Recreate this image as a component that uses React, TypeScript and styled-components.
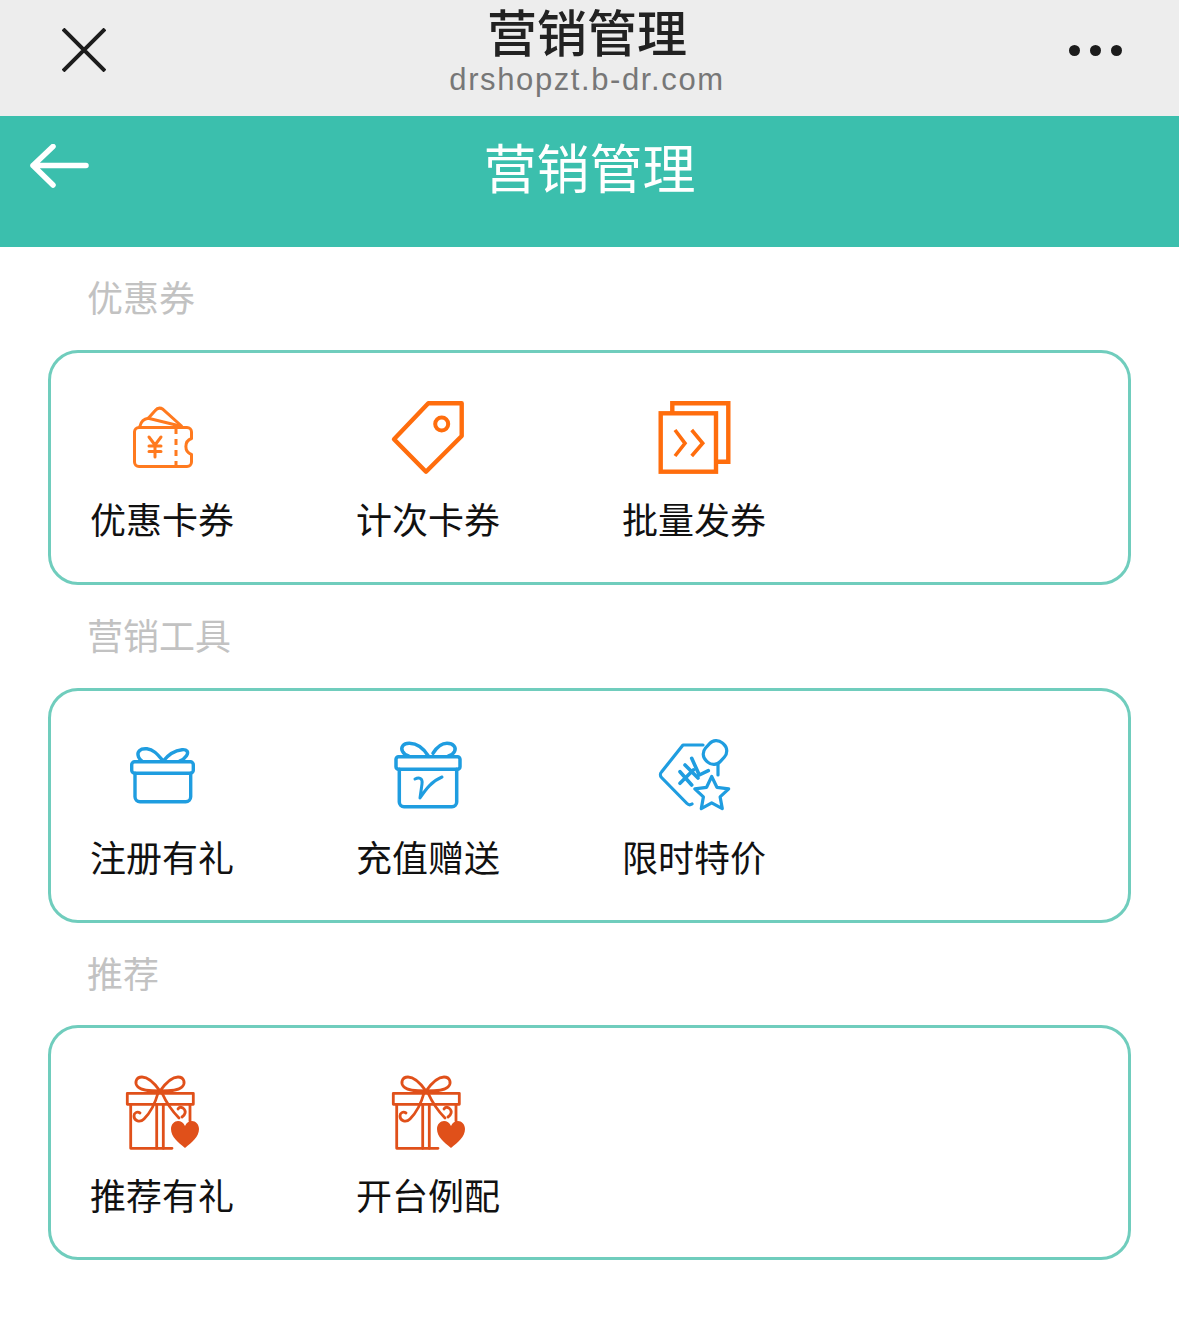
import React from "react";
import styled, { createGlobalStyle } from "styled-components";

const GlobalStyle = createGlobalStyle`
  html, body {
    margin: 0;
    padding: 0;
    background: #fff;
  }
  body {
    font-family: "Noto Sans CJK SC", "Noto Sans", sans-serif;
  }
`;

const Page = styled.div`
  width: 1179px;
  min-height: 1326px;
  background: #fff;
`;

const TopBar = styled.div`
  height: 116px;
  box-sizing: border-box;
  padding: 0 57px 16px 62px;
  background: #ededed;
  display: grid;
  grid-template-columns: 200px 1fr 210px;
  align-items: center;
`;

const TopTitle = styled.div`
  align-self: start;
  padding-top: 5px;
  display: flex;
  flex-direction: column;
  align-items: center;
`;

const TopName = styled.div`
  font-size: 50px;
  line-height: 50px;
  font-weight: 500;
  color: #222;
`;

const TopHost = styled.div`
  margin-top: 8px;
  font-family: "Liberation Sans", sans-serif;
  font-size: 31px;
  line-height: 34px;
  letter-spacing: 1.6px;
  color: #777;
`;

const Dots = styled.div`
  justify-self: end;
  display: flex;
  gap: 10px;
`;

const Dot = styled.span`
  width: 11px;
  height: 11px;
  border-radius: 50%;
  background: #1c1c1c;
`;

const GreenBar = styled.div`
  height: 131px;
  box-sizing: border-box;
  padding: 14px 0 0 30px;
  background: #3bbfad;
  display: grid;
  grid-template-columns: 180px 1fr 210px;
  align-items: start;
`;

const GreenTitle = styled.div`
  text-align: center;
  font-size: 53px;
  line-height: 72px;
  color: #fff;
`;

const BackIcon = styled.svg`
  display: block;
  margin-top: 14px;
`;

const Sections = styled.div`
  padding: 0 48px;
`;

const SectionLabel = styled.div`
  height: 102.75px;
  box-sizing: border-box;
  padding: 13px 0 0 39px;
  font-size: 36px;
  line-height: 72px;
  color: #c2c2c2;
`;

const Card = styled.div`
  height: 235px;
  box-sizing: border-box;
  padding: 43px 0 0 39px;
  border: 3px solid #70cdbd;
  border-radius: 30px;
  display: grid;
  grid-template-columns: repeat(4, 266px);
`;

const Item = styled.div`
  width: 144px;
  display: flex;
  flex-direction: column;
  align-items: center;
`;

const ItemIcon = styled.svg`
  display: block;
  width: 80px;
  height: 80px;
`;

const ItemName = styled.div`
  margin-top: 17.5px;
  font-size: 36px;
  line-height: 50px;
  color: #111;
`;

const ORANGE = "#ff7a1f";
const DEEP = "#ff6d0d";
const BLUE = "#1f9de0";
const RED = "#e0501a";

const WalletIcon = () => (
  <ItemIcon viewBox="0 0 80 80" fill="none" stroke={ORANGE} strokeWidth="3" strokeLinecap="round" strokeLinejoin="round">
    <path d="M17 31.500H65a4.500 4.500 0 0 1 4.500 4.500V42.500a8.500 8.500 0 0 0 0 16V66a4.500 4.500 0 0 1-4.500 4.500H17a4.500 4.500 0 0 1-4.500-4.500V36a4.500 4.500 0 0 1 4.500-4.500z" />
    <path d="M54 32V70.500" strokeDasharray="6 5" strokeLinecap="butt" />
    <path d="M27 41l6 8 6-8M33 49V61M27 50H39M27 55.500H39" />
    <path d="M18 30c1-4 4-7 8.300-7.700L58 30" />
    <path d="M26.300 22.300L33 14.700c2-2.400 5-3.400 8-1.400L59.500 30" />
  </ItemIcon>
);

const TagIcon = () => (
  <ItemIcon viewBox="0 0 80 80" fill="none" stroke={DEEP} strokeWidth="4.400" strokeLinejoin="round">
    <path d="M40.300 7.300H73.700V40L38 75.700 6 43.300z" />
    <circle cx="53.700" cy="28" r="6.500" strokeWidth="4" />
  </ItemIcon>
);

const BatchIcon = () => (
  <ItemIcon viewBox="0 0 80 80" fill="none" stroke={DEEP} strokeWidth="4.400">
    <path d="M18.300 17V7.300H74.300V65.700H62" />
    <rect x="6.700" y="17.300" width="55.300" height="58.400" />
    <path d="M21 34l10 13.300L21 60M37.700 34l11 13.300L37.700 60" strokeWidth="3.600" />
  </ItemIcon>
);

const GiftIcon = () => (
  <ItemIcon viewBox="0 0 80 80" fill="none" stroke={BLUE} strokeWidth="3.400" strokeLinecap="round" strokeLinejoin="round">
    <rect x="9.700" y="27.700" width="61.600" height="11.600" rx="3" />
    <path d="M13 39.300V62.700a5 5 0 0 0 5 5H63.700a5 5 0 0 0 5-5V39.300" />
    <path d="M41.300 27C36 21 32 15.500 25 14.800c-7-.7-10.500 3-8.500 8 .8 2 2 3.500 3.500 4.200" />
    <path d="M41.300 27C46 21 53 16.500 60 15.700c5-.5 7 2.300 4.500 6-1.500 2.300-4 4.300-7 5.300" />
  </ItemIcon>
);

const RechargeIcon = () => (
  <ItemIcon viewBox="0 0 80 80" fill="none" stroke={BLUE} strokeWidth="3.500" strokeLinecap="round" strokeLinejoin="round">
    <rect x="8" y="22.700" width="64" height="12.600" rx="2.500" />
    <path d="M11.300 35.300V68a4.700 4.700 0 0 0 4.700 4.700H64a4.700 4.700 0 0 0 4.700-4.700V35.300" />
    <path d="M40.300 22C36 15 29 9.500 21.500 9.300c-6.500-.2-9 4-7 8 1 2 3 3.800 6 4.700" />
    <path d="M45 19.300C49 13 54 9.300 59 9.300c6.500 0 9.500 4.200 7.500 8.200-1 2-3 3.600-6 4.500" />
    <path d="M27 45c4-2 8-1 7 5l-2 14c6-9 12-17 22-21" strokeWidth="3" />
  </ItemIcon>
);

const LimitIcon = () => (
  <ItemIcon viewBox="0 0 80 80" fill="none" stroke={BLUE} strokeWidth="3.200" strokeLinecap="round" strokeLinejoin="round">
    <path d="M49 11H29L7.500 38a4 4 0 0 0 0 5.500L33 69.500c1.500 1.500 3.500 1.500 5 .5" />
    <path d="M64 30V41" />
    <rect x="51" y="6.500" width="20" height="24" rx="9" transform="rotate(42 61 18.500)" />
    <path d="M37.700 24.300L45.300 41l9-4.300M26 37.700L37.700 51M26 49.300L39.300 36M31 31L44 44" strokeWidth="3.600" />
    <path d="M57.700 42.500l5.200 10.800 11.800 1.500-8.600 8.100 2.200 11.700-10.600-5.800-10.400 5.800 2.100-11.700-8.600-8.100 11.800-1.500z" />
  </ItemIcon>
);

const HeartGiftIcon = () => (
  <ItemIcon viewBox="0 0 80 80" fill="none" stroke={RED} strokeWidth="2.800" strokeLinecap="round" strokeLinejoin="round">
    <rect x="5.300" y="22.300" width="66" height="11" />
    <path d="M8.700 33.300V77.300H50M68 33.300V50" />
    <path d="M34.700 33.300V77.300M41.300 33.300V77.300" />
    <path d="M38 20C33 13 27 6 20 6c-6 0-8 6-4 10 4 4 14 4 22 4z" />
    <path d="M38 20C43 13 49 6 56 6c6 0 8 6 4 10-4 4-14 4-22 4z" />
    <path d="M36 22C33 33 28 42 22 48c-4 4-10 2-10-3 0-3 3-5 6-3" />
    <path d="M40 22C45 33 51 41 57 47M60 46c3-2 5-6 1-9-2-1-4-1-5 1" />
    <path d="M63 77C56 71 49 66 49 58c0-5 3.500-8 7-8 3 0 5.500 1.500 7 5 1.500-3.500 4-5 7-5 3.500 0 7 3 7 8 0 8-7 13-14 19z" fill={RED} stroke="none" />
  </ItemIcon>
);

type Entry = { name: string; icon: React.ReactNode };
type Group = { label: string; items: Entry[] };

const groups: Group[] = [
  {
    label: "优惠券",
    items: [
      { name: "优惠卡券", icon: <WalletIcon /> },
      { name: "计次卡券", icon: <TagIcon /> },
      { name: "批量发券", icon: <BatchIcon /> },
    ],
  },
  {
    label: "营销工具",
    items: [
      { name: "注册有礼", icon: <GiftIcon /> },
      { name: "充值赠送", icon: <RechargeIcon /> },
      { name: "限时特价", icon: <LimitIcon /> },
    ],
  },
  {
    label: "推荐",
    items: [
      { name: "推荐有礼", icon: <HeartGiftIcon /> },
      { name: "开台例配", icon: <HeartGiftIcon /> },
    ],
  },
];

export default function App() {
  return (
    <Page>
      <GlobalStyle />
      <TopBar>
        <svg width="44" height="44" viewBox="0 0 44 44" stroke="#1c1c1c" strokeWidth="4">
          <path d="M1 1L43 43M43 1L1 43" />
        </svg>
        <TopTitle>
          <TopName>营销管理</TopName>
          <TopHost>drshopzt.b-dr.com</TopHost>
        </TopTitle>
        <Dots>
          <Dot />
          <Dot />
          <Dot />
        </Dots>
      </TopBar>
      <GreenBar>
        <BackIcon width="60" height="44" viewBox="0 0 60 44" fill="none" stroke="#fff" strokeWidth="5.500" strokeLinecap="round" strokeLinejoin="round">
          <path d="M23 2.500L3 21.500 23 41M3 21.500H56" />
        </BackIcon>
        <GreenTitle>营销管理</GreenTitle>
      </GreenBar>
      <Sections>
        {groups.map((group) => (
          <div key={group.label}>
            <SectionLabel>{group.label}</SectionLabel>
            <Card>
              {group.items.map((item) => (
                <Item key={item.name}>
                  {item.icon}
                  <ItemName>{item.name}</ItemName>
                </Item>
              ))}
            </Card>
          </div>
        ))}
      </Sections>
    </Page>
  );
}
